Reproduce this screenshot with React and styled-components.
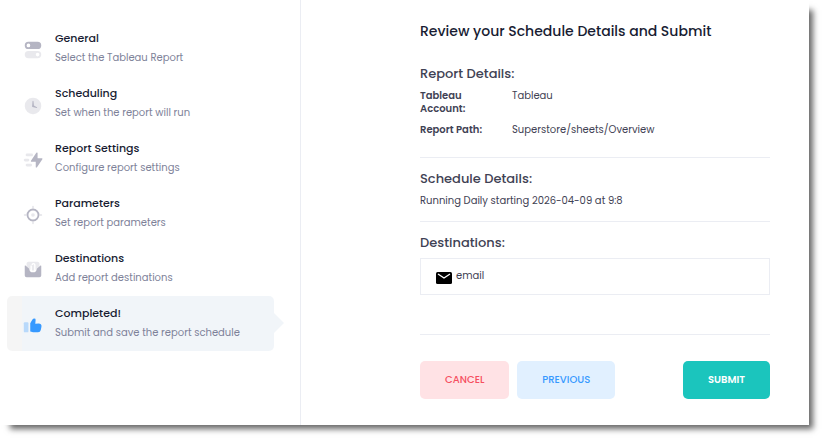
import React from 'react';
import styled, { createGlobalStyle } from 'styled-components';

const GlobalStyle = createGlobalStyle`
  * {
    box-sizing: border-box;
  }

  body {
    margin: 0;
    background: #fff;
    color: #3f4254;
    font-family: Poppins, Inter, 'Liberation Sans', sans-serif;
    font-size: 10px;
  }
`;

const Window = styled.div`
  display: flex;
  min-height: calc(100vh - 15px);
  margin: 0 15px 15px 0;
  background: #fff;
  box-shadow: 7px 7px 6px -3px rgba(0, 0, 0, 0.6);
`;

const Sidebar = styled.nav`
  flex: 0 0 301px;
  padding: 21px 26px 0 7px;
  border-right: 1px solid #ebedf3;
`;

const StepList = styled.ol`
  list-style: none;
  margin: 0;
  padding: 0;
`;

const StepLink = styled.a`
  position: relative;
  display: flex;
  align-items: center;
  gap: 11px;
  height: 55px;
  padding: 0 15px;
  border-radius: 5px;
  color: #b5b5c3;
  text-decoration: none;

  &[aria-current='step'] {
    color: #3699ff;
    background: linear-gradient(to right, #f5f5f5 15px, #f1f5f9 15px);
  }

  &[aria-current='step']::after {
    content: '';
    position: absolute;
    left: 100%;
    top: 17px;
    border: 10px solid transparent;
    border-right-width: 0;
    border-left-color: #f1f5f9;
  }
`;

const StepIcon = styled.svg`
  flex: none;
  width: 22px;
  height: 22px;
  margin-top: 2px;
  fill: currentColor;
`;

const StepText = styled.span`
  display: flex;
  flex-direction: column;
  padding-bottom: 2px;
  line-height: 20px;
  white-space: nowrap;
`;

const StepTitle = styled.span`
  color: #181c32;
  font-size: 11px;
  font-weight: 500;
`;

const StepDescription = styled.span`
  color: #7e8299;
`;

const Main = styled.main`
  flex: 1;
  padding: 19px 39px 26px 119px;
`;

const PageTitle = styled.h1`
  margin: 0 0 21px;
  color: #181c32;
  font-size: 14px;
  font-weight: 500;
  line-height: 24px;
`;

const Section = styled.section`
  padding-bottom: ${(props) => props.$space || 13}px;
  margin-bottom: 11px;
  border-bottom: 1px solid #ebedf3;
`;

const SectionTitle = styled.h2`
  margin: 0 0 5px;
  font-size: 13px;
  font-weight: 500;
  line-height: 20px;
`;

const Details = styled.dl`
  display: grid;
  grid-template-columns: 74px 1fr;
  gap: 8px 18px;
  margin: 0;
  line-height: 13px;
`;

const Term = styled.dt`
  font-weight: 600;
`;

const Value = styled.dd`
  margin: 0;
`;

const Summary = styled.p`
  margin: 0;
  line-height: 14px;
`;

const Destination = styled.div`
  display: flex;
  align-items: center;
  gap: 4px;
  height: 37px;
  padding: 0 15px 2px;
  border: 1px solid #ebedf3;
`;

const MailIcon = styled.svg`
  width: 16px;
  height: 12px;
  margin-top: 4px;
`;

const Actions = styled.div`
  display: flex;
  gap: 8px;
  padding-top: 15px;
`;

const Button = styled.button`
  height: 38px;
  padding: 0 25px;
  border: none;
  border-radius: 5px;
  background: ${(props) => props.$background};
  color: ${(props) => props.$color};
  font-family: inherit;
  font-size: 10px;
  font-weight: ${(props) => props.$weight || 500};
  text-transform: uppercase;
  cursor: pointer;
`;

const SubmitButton = styled(Button)`
  margin-left: auto;
`;

const steps = [
  {
    title: 'General',
    description: 'Select the Tableau Report',
    icon: (
      <>
        <path
          fillRule='evenodd'
          d='M7 3h10a4 4 0 0 1 0 8H7a4 4 0 0 1 0-8Zm0 6a2 2 0 1 0 0-4 2 2 0 0 0 0 4Z'
        />
        <path
          opacity='0.3'
          fillRule='evenodd'
          d='M7 13h10a4 4 0 0 1 0 8H7a4 4 0 0 1 0-8Zm10 6a2 2 0 1 0 0-4 2 2 0 0 0 0 4Z'
        />
      </>
    ),
  },
  {
    title: 'Scheduling',
    description: 'Set when the report will run',
    icon: (
      <>
        <circle opacity='0.3' cx='12' cy='13' r='9' />
        <path d='M11.96 7.5h.09a.5.5 0 0 1 .5.45L13 12.5l3.25 1.86a.5.5 0 0 1 .25.43V15a.38.38 0 0 1-.48.37l-4.62-1.26a.5.5 0 0 1-.37-.52l.43-5.63a.5.5 0 0 1 .5-.46Z' />
      </>
    ),
  },
  {
    title: 'Report Settings',
    description: 'Configure report settings',
    icon: (
      <>
        <path d='m16.37 19.94 5.85-8.77A.75.75 0 0 0 21.6 10H17V4.48a.75.75 0 0 0-1.37-.42l-5.85 8.77A.75.75 0 0 0 10.4 14H15v5.52a.75.75 0 0 0 1.37.42Z' />
        <g opacity='0.3'>
          <rect x='4' y='5' width='8' height='3' rx='1.5' />
          <rect x='2' y='10.5' width='6' height='3' rx='1.5' />
          <rect x='4' y='16' width='7' height='3' rx='1.5' />
        </g>
      </>
    ),
  },
  {
    title: 'Parameters',
    description: 'Set report parameters',
    icon: (
      <>
        <path
          fillRule='evenodd'
          d='M12 19a7 7 0 1 0 0-14 7 7 0 0 0 0 14Zm0-2a5 5 0 1 1 0-10 5 5 0 0 1 0 10Z'
        />
        <g opacity='0.3'>
          <circle cx='12' cy='12' r='2' />
          <rect x='11' y='2' width='2' height='3' rx='1' />
          <rect x='11' y='19' width='2' height='3' rx='1' />
          <rect x='2' y='11' width='3' height='2' rx='1' />
          <rect x='19' y='11' width='3' height='2' rx='1' />
        </g>
      </>
    ),
  },
  {
    title: 'Destinations',
    description: 'Add report destinations',
    icon: (
      <>
        <path
          opacity='0.3'
          d='M5 8V5a2 2 0 0 1 2-2h10a2 2 0 0 1 2 2v3l-7 6-7-6Z'
        />
        <path d='M3.8 7.2 8 10.5a4 4 0 0 0 8 0l4.2-3.3a.5.5 0 0 1 .8.4V18a2 2 0 0 1-2 2H5a2 2 0 0 1-2-2V7.6a.5.5 0 0 1 .8-.4Z' />
        <path
          d='M10 7v4.5a2 2 0 0 0 4 0V6.5a1.5 1.5 0 0 0-3 0'
          fill='none'
          stroke='#fff'
          strokeWidth='1.5'
        />
      </>
    ),
  },
  {
    title: 'Completed!',
    description: 'Submit and save the report schedule',
    current: true,
    icon: (
      <>
        <path d='M9 10v9l1.15.38c1.22.41 2.5.62 3.8.62h3.59a3 3 0 0 0 2.94-2.41l.75-3.75a3 3 0 0 0-3.14-3.58l-3.59.24.36-4.01A1.37 1.37 0 0 0 13.5 5a2.65 2.65 0 0 0-2.27 1.29L9 10Z' />
        <rect opacity='0.3' x='2' y='9' width='5' height='11' rx='1' />
      </>
    ),
  },
];

export default function App() {
  return (
    <>
      <GlobalStyle />
      <Window>
        <Sidebar aria-label='Schedule steps'>
          <StepList>
            {steps.map((step) => (
              <li key={step.title}>
                <StepLink
                  href='#'
                  aria-current={step.current ? 'step' : undefined}
                >
                  <StepIcon viewBox='0 0 24 24' aria-hidden='true'>
                    {step.icon}
                  </StepIcon>
                  <StepText>
                    <StepTitle>{step.title}</StepTitle>
                    <StepDescription>{step.description}</StepDescription>
                  </StepText>
                </StepLink>
              </li>
            ))}
          </StepList>
        </Sidebar>
        <Main>
          <PageTitle>Review your Schedule Details and Submit</PageTitle>
          <Section $space={21}>
            <SectionTitle>Report Details:</SectionTitle>
            <Details>
              <Term>Tableau Account:</Term>
              <Value>Tableau</Value>
              <Term>Report Path:</Term>
              <Value>Superstore/sheets/Overview</Value>
            </Details>
          </Section>
          <Section>
            <SectionTitle>Schedule Details:</SectionTitle>
            <Summary>Running Daily starting 2026-04-09 at 9:8</Summary>
          </Section>
          <Section $space={39}>
            <SectionTitle>Destinations:</SectionTitle>
            <Destination>
              <MailIcon viewBox='0 0 16 12' aria-hidden='true'>
                <rect width='16' height='12' rx='1.5' fill='#000' />
                <path
                  d='m2 2 6 4 6-4'
                  fill='none'
                  stroke='#fff'
                  strokeWidth='1.3'
                />
              </MailIcon>
              email
            </Destination>
          </Section>
          <Actions>
            <Button type='button' $background='#ffe2e5' $color='#f64e60'>
              Cancel
            </Button>
            <Button type='button' $background='#e1f0ff' $color='#3699ff'>
              Previous
            </Button>
            <SubmitButton
              type='submit'
              $background='#1bc5bd'
              $color='#fff'
              $weight={600}
            >
              Submit
            </SubmitButton>
          </Actions>
        </Main>
      </Window>
    </>
  );
}
